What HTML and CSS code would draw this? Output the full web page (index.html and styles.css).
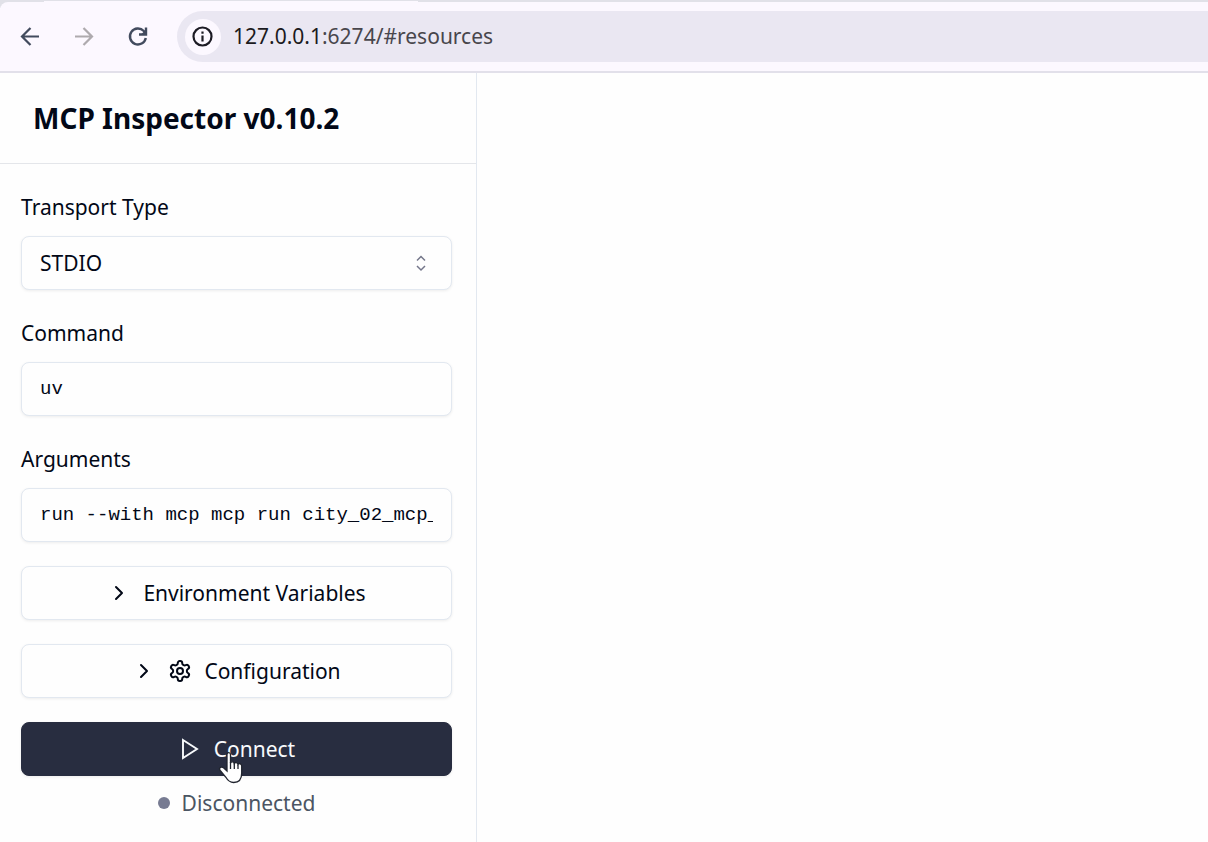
FILE: index.html
```html
<!DOCTYPE html>
<html lang="en">
<head>
<meta charset="utf-8">
<title>MCP Inspector</title>
<link rel="stylesheet" href="styles.css">
</head>
<body>
<div class="tab-strip"><div class="active-tab"></div></div>
<header class="toolbar">
  <nav class="nav-buttons" aria-label="Browser navigation">
    <button class="nav-button" aria-label="Back">
      <svg width="24" height="24" viewBox="0 0 24 24" fill="none" stroke="currentColor" stroke-width="2.200"><path d="M21 11.500H4M12.500 3L4 11.500l8.500 8.500"/></svg>
    </button>
    <button class="nav-button muted" aria-label="Forward">
      <svg width="24" height="24" viewBox="0 0 24 24" fill="none" stroke="currentColor" stroke-width="2.200"><path d="M3 11.500h17M11.500 3L20 11.500l-8.500 8.500"/></svg>
    </button>
    <button class="nav-button" aria-label="Reload">
      <svg width="24" height="24" viewBox="0 0 24 24" fill="none" stroke="currentColor" stroke-width="2.400"><path d="M19.800 13A8 8 0 1 1 17.800 6L20 8.500"/><path d="M20 2.500v7h-7"/><path d="M20 4.500V9.500H15z" fill="currentColor" stroke="none"/></svg>
    </button>
  </nav>
  <div class="address-bar">
    <button class="site-info" aria-label="Site information">
      <svg width="22" height="22" viewBox="0 0 22 22" fill="none" stroke="currentColor" stroke-width="2.200"><circle cx="10.500" cy="10.500" r="9"/><path d="M10.500 9.500v6M10.500 5.500v2.200"/></svg>
    </button>
    <div class="url"><span class="host">127.0.0.1</span>:6274/#resources</div>
  </div>
</header>
<div class="app">
  <aside class="sidebar">
    <div class="sidebar-header"><h1 class="title">MCP Inspector v0.10.2</h1></div>
    <form class="form">
      <div class="field">
        <label class="label" for="transport">Transport Type</label>
        <div class="select-wrap">
          <select class="control" id="transport"><option>STDIO</option><option>SSE</option></select>
          <svg class="select-icon" width="24" height="24" viewBox="0 0 24 24" fill="none" stroke="currentColor" stroke-width="1.500"><path d="M8 9.500L12 5.500l4 4M8 15l4 4 4-4"/></svg>
        </div>
      </div>
      <div class="field">
        <label class="label" for="command">Command</label>
        <input class="control mono" id="command" type="text" value="uv">
      </div>
      <div class="field">
        <label class="label" for="arguments">Arguments</label>
        <input class="control mono" id="arguments" type="text" value="run --with mcp mcp run city_02_mcp_server.py">
      </div>
      <button class="button" type="button">
        <svg width="24" height="24" viewBox="0 0 24 24" fill="none" stroke="currentColor" stroke-width="2" stroke-linecap="round" stroke-linejoin="round"><path d="M9 18l6-6-6-6"/></svg>
        <span>Environment Variables</span>
      </button>
      <button class="button" type="button">
        <svg width="24" height="24" viewBox="0 0 24 24" fill="none" stroke="currentColor" stroke-width="2" stroke-linecap="round" stroke-linejoin="round"><path d="M9 18l6-6-6-6"/></svg>
        <svg width="24" height="24" viewBox="0 0 24 24" fill="none" stroke="currentColor" stroke-width="2" stroke-linecap="round" stroke-linejoin="round"><path d="M12.220 2h-.44a2 2 0 0 0-2 2v.18a2 2 0 0 1-1 1.730l-.43.25a2 2 0 0 1-2 0l-.15-.08a2 2 0 0 0-2.730.73l-.22.38a2 2 0 0 0 .73 2.730l.15.1a2 2 0 0 1 1 1.720v.51a2 2 0 0 1-1 1.740l-.15.09a2 2 0 0 0-.73 2.730l.22.38a2 2 0 0 0 2.730.73l.15-.08a2 2 0 0 1 2 0l.43.25a2 2 0 0 1 1 1.730V20a2 2 0 0 0 2 2h.44a2 2 0 0 0 2-2v-.18a2 2 0 0 1 1-1.730l.43-.25a2 2 0 0 1 2 0l.15.08a2 2 0 0 0 2.730-.73l.22-.39a2 2 0 0 0-.73-2.730l-.15-.08a2 2 0 0 1-1-1.740v-.5a2 2 0 0 1 1-1.740l.15-.09a2 2 0 0 0 .73-2.730l-.22-.38a2 2 0 0 0-2.730-.73l-.15.08a2 2 0 0 1-2 0l-.43-.25a2 2 0 0 1-1-1.730V4a2 2 0 0 0-2-2z"/><circle cx="12" cy="12" r="3"/></svg>
        <span>Configuration</span>
      </button>
      <div class="connection">
        <button class="button primary" type="button">
          <svg width="24" height="24" viewBox="0 0 24 24" fill="none" stroke="currentColor" stroke-width="1.900"><path d="M5 3l14 9-14 9z"/></svg>
          <span>Connect</span>
          <svg class="pointer" width="26" height="33" viewBox="0 0 26 33"><path d="M9 3.500C9 1 12.500 1 12.500 3.500V12c.5-1.700 3.500-1.500 3.800.4.700-1.400 3.500-1.100 3.700.9.900-1.200 3.700-.7 3.700 1.700V22c0 6-3 9.500-8 9.500-4 0-6-2-8-5.500l-5.500-6.500c-1.800-2.500 1-4.500 3.300-2.700L9 20z" fill="#fff" stroke="#20242e" stroke-width="1.300"/><path d="M12.500 11v7M16.300 12v6M20 13.500V18" fill="none" stroke="#20242e" stroke-width="1.300"/></svg>
        </button>
        <div class="status"><span class="status-dot"></span><span>Disconnected</span></div>
      </div>
    </form>
  </aside>
  <main class="content"></main>
</div>
</body>
</html>
```

FILE: styles.css
```css
* {
  box-sizing: border-box;
}

body {
  display: flex;
  flex-direction: column;
  min-height: 100vh;
  margin: 0;
  background: #fefefe;
  color: #020817;
  font: 21px/36px "Noto Sans", "Open Sans", sans-serif;
}

button,
input,
select {
  font: inherit;
  color: inherit;
}

svg {
  flex: none;
}

.tab-strip {
  height: 8px;
  margin-bottom: -6px;
  padding: 1px 0 0 44px;
  background: #e1e1e8;
}

.active-tab {
  width: 374px;
  height: 2px;
  background: #fcf8ff;
}

.toolbar {
  display: flex;
  align-items: center;
  gap: 25px;
  padding: 9px 0 9px 16px;
  border-bottom: 2px solid #e2e0ea;
  border-top-left-radius: 8px;
  background: #fcf8ff;
}

.nav-buttons {
  display: flex;
  gap: 26px;
}

.nav-button {
  display: flex;
  padding: 2px;
  border: 0;
  background: none;
  color: #424b5e;
}

.nav-button.muted {
  color: #aeaaae;
}

.address-bar {
  display: flex;
  flex: 1;
  align-items: center;
  gap: 12px;
  height: 51px;
  padding-left: 8px;
  border-radius: 26px 0 0 26px;
  background: #eae7f2;
}

.site-info {
  display: flex;
  align-items: center;
  justify-content: center;
  width: 36px;
  height: 36px;
  padding: 0;
  border: 0;
  border-radius: 50%;
  background: #fcf8ff;
  color: #1c1b24;
}

.url {
  padding-bottom: 2px;
  color: #48464c;
}

.host {
  color: #1b1a20;
}

.app {
  display: flex;
  flex: 1;
}

.sidebar {
  width: 477px;
  border-right: 1px solid #e2e8f0;
}

.content {
  flex: 1;
}

.sidebar-header {
  padding: 27px 33px;
  border-bottom: 1px solid #e4e6ea;
}

.title {
  margin: 0;
  font-size: 28px;
  font-weight: 700;
  line-height: 36px;
}

.form {
  display: flex;
  flex-direction: column;
  gap: 24px;
  padding: 24px 24px 24px 21px;
}

.field {
  display: flex;
  flex-direction: column;
  gap: 10px;
}

.label {
  line-height: 38px;
}

.select-wrap {
  position: relative;
}

.control,
.button {
  width: 100%;
  height: 54px;
  border: 1px solid #e2e8f0;
  border-radius: 8px;
  background: #fefefe;
  box-shadow: 0 1px 3px rgba(0, 0, 0, 0.07);
}

.control {
  display: block;
  padding: 0 18px;
  appearance: none;
}

.mono {
  font-family: "Liberation Mono", monospace;
  font-size: 19px;
}

.select-icon {
  position: absolute;
  top: 15px;
  right: 19px;
  color: #74768a;
  pointer-events: none;
}

.button {
  display: flex;
  align-items: center;
  justify-content: center;
  gap: 12px;
  padding: 0 18px;
}

.connection {
  display: flex;
  flex-direction: column;
  gap: 9px;
}

.primary {
  position: relative;
  border-color: #282d40;
  background: #282d40;
  color: #f8fafc;
}

.pointer {
  position: absolute;
  top: 28px;
  left: 196px;
}

.status {
  display: flex;
  align-items: center;
  justify-content: center;
  gap: 12px;
  color: #4b5563;
}

.status-dot {
  width: 12px;
  height: 12px;
  border-radius: 50%;
  background: #777b92;
}
```
